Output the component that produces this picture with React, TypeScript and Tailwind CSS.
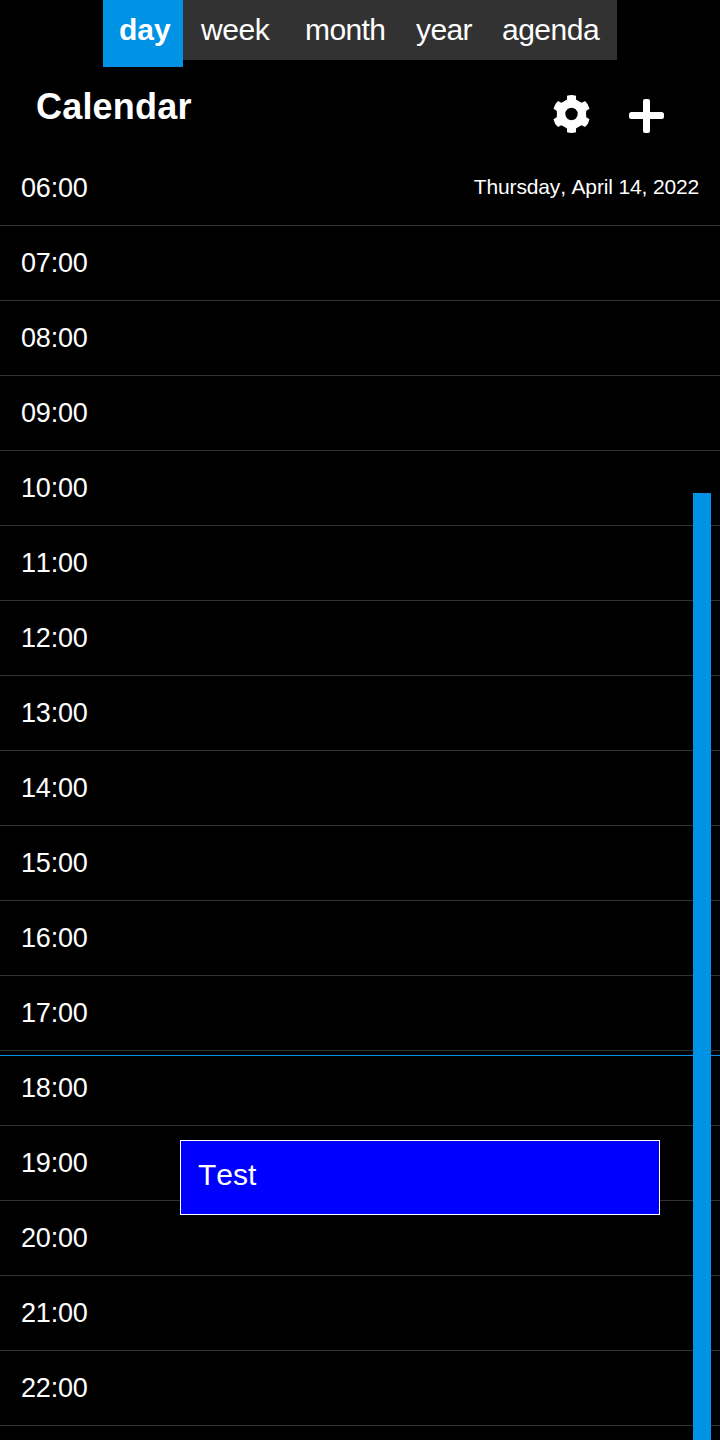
import React from 'react';

const tabs = [
  { name: 'day', style: 'w-20 h-[67px] pl-4 bg-[#0092e5] font-bold text-[30px]' },
  { name: 'week', style: 'w-[104px] h-[60px] pl-[18px] bg-[#323232] text-[30px] tracking-[-0.4px]' },
  { name: 'month', style: 'w-[111px] h-[60px] pl-[18px] bg-[#323232] text-[30px] tracking-[-0.6px]' },
  { name: 'year', style: 'w-[87px] h-[60px] pl-[18px] bg-[#323232] text-[30px] tracking-[-0.6px]' },
  { name: 'agenda', style: 'w-[132px] h-[60px] pl-[17px] bg-[#323232] text-[30px] tracking-[-0.5px]' },
];

const hours = Array.from({ length: 17 }, (_, i) => `${String(i + 6).padStart(2, '0')}:00`);

const GearIcon = () => (
  <svg width="38" height="38" viewBox="0 0 38 38" fill="none">
    <circle cx="18.5" cy="19" r="10.4" stroke="#fff" strokeWidth="8.4" />
    {[0, 60, 120, 180, 240, 300].map((angle) => (
      <path
        key={angle}
        d="M14 0.8 Q18.5 -0.8 23 0.8 V4.5 L26.5 7 H10.5 L14 4.5 Z"
        fill="#fff"
        transform={`rotate(${angle} 18.5 19)`}
      />
    ))}
  </svg>
);

const PlusIcon = () => (
  <svg width="35" height="35" viewBox="0 0 35 35" fill="#fff">
    <rect x="14" y="0" width="7" height="34" rx="2" />
    <rect x="0" y="13" width="35" height="7" rx="2.5" />
  </svg>
);

const App = () => {
  return (
    <div className="relative h-[1440px] w-[720px] overflow-hidden bg-black font-['Liberation_Sans',sans-serif] text-white [font-kerning:none]">
      {/* View tabs */}
      <nav className="flex h-[67px] items-start justify-center">
        {tabs.map((tab) => (
          <button key={tab.name} className={`${tab.style} flex items-start text-left leading-[60px]`}>
            {tab.name}
          </button>
        ))}
      </nav>

      {/* Title and actions */}
      <header className="flex h-[84px] items-start justify-between pl-9 pr-14">
        <h1 className="pt-5 text-4xl font-bold leading-10 tracking-[0.2px]">Calendar</h1>
        <div className="flex items-start gap-[38px] pt-7">
          <button><GearIcon /></button>
          <button className="pt-1"><PlusIcon /></button>
        </div>
      </header>

      {/* Hours */}
      <main>
        {hours.map((hour, i) => (
          <div key={hour} className="flex h-[75px] items-center justify-between border-b border-[#323232] px-[21px]">
            <span className="text-[27px] tracking-[-0.2px]">{hour}</span>
            {i === 0 && <span className="pb-0.5 text-[21px] tracking-[-0.15px]">Thursday, April 14, 2022</span>}
          </div>
        ))}
      </main>

      {/* Current time */}
      <div className="absolute left-0 top-[1055px] h-px w-full bg-[#0092e5]" />

      {/* Event */}
      <div className="absolute left-[180px] top-[1140px] h-[75px] w-[480px] border border-white bg-[#0000ff] pl-[17px] text-[30px] leading-[68px]">
        Test
      </div>

      {/* Scroll bar */}
      <div className="absolute bottom-0 left-[693px] top-[493px] w-[18px] bg-[#0092e5]" />
    </div>
  );
};

export default App;
